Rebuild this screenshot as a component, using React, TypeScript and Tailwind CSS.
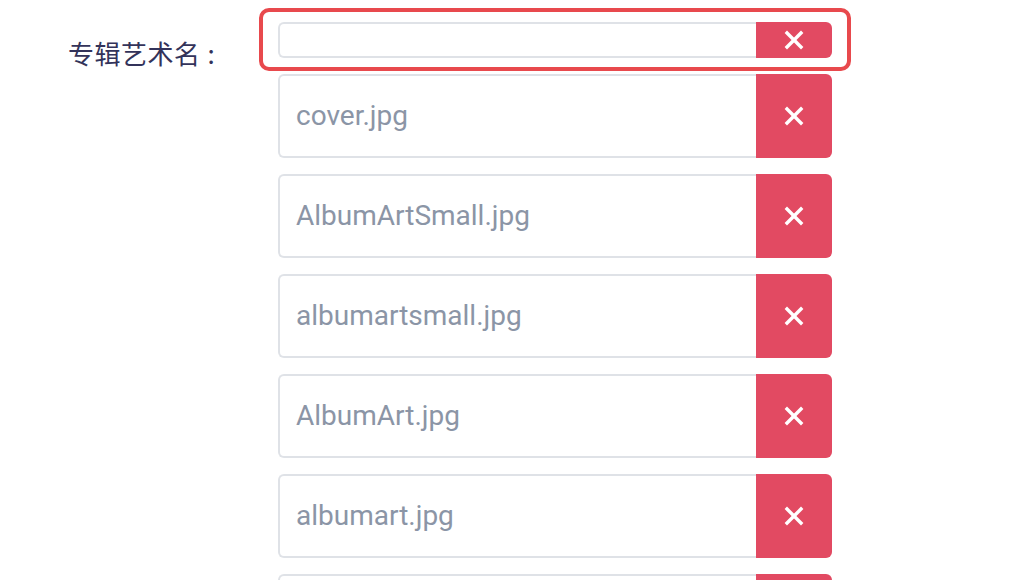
import { X } from "lucide-react";

const FILES = [
  "cover.jpg",
  "AlbumArtSmall.jpg",
  "albumartsmall.jpg",
  "AlbumArt.jpg",
  "albumart.jpg",
  "folder.jpg",
];

const RemoveButton = () => (
  <button
    type="button"
    className="w-[76px] shrink-0 flex items-center justify-center bg-[#e24a62] rounded-r-md text-white"
  >
    <X size={28} strokeWidth={2.9} strokeLinecap="square" />
  </button>
);

export default function App() {
  return (
    <div
      className="w-[1012px] h-[580px] overflow-hidden bg-white flex items-start"
      style={{ fontFamily: "Roboto, 'Noto Sans CJK SC', sans-serif" }}
    >
      <div className="w-[278px] shrink-0 pl-[68px] pt-[33px]">
        <span
          className="text-[26px] text-[#33335a] tracking-[0.5px]"
          style={{ fontFamily: "'Noto Sans CJK SC', sans-serif" }}
        >
          专辑艺术名<span className="ml-[7px]">:</span>
        </span>
      </div>

      <div className="w-[554px] flex flex-col gap-4 pt-[22px]">
        {/* empty input, highlighted */}
        <div className="relative flex h-9 shrink-0">
          <input
            className="flex-1 min-w-0 border-2 border-r-0 border-[#dfe2e7] rounded-l-md outline-none"
            defaultValue=""
          />
          <RemoveButton />
          <div className="absolute -left-[19px] -right-[19px] -top-[14px] -bottom-[13px] border-4 border-[#e8494d] rounded-[10px] pointer-events-none" />
        </div>

        {FILES.map((f) => (
          <div key={f} className="flex h-[84px] shrink-0">
            <div className="flex-1 flex items-center pl-[16px] border-2 border-r-0 border-[#dfe2e7] rounded-l-md text-[28px] text-[#8b95a6]">
              {f}
            </div>
            <RemoveButton />
          </div>
        ))}
      </div>
    </div>
  );
}
